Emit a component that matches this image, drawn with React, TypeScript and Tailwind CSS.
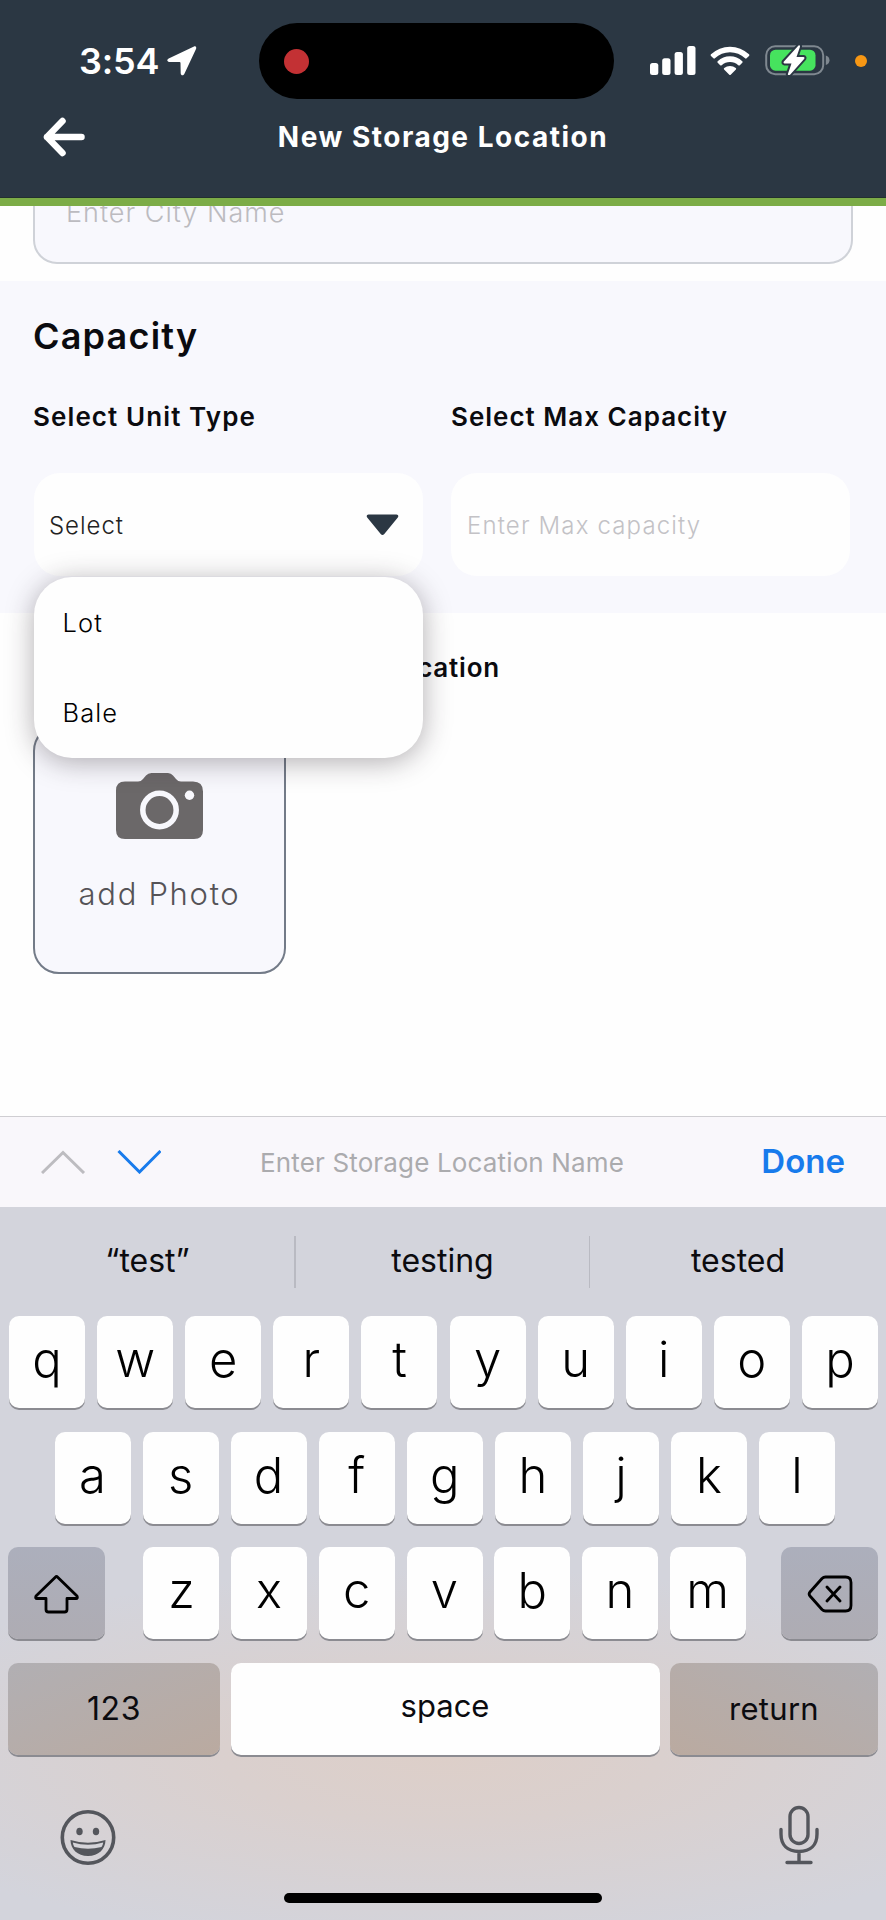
import React from "react";

const keyShadow = "shadow-[0_2px_0_#8b8b91]";

function Key({ children, className = "w-[76px]" }: { children: React.ReactNode; className?: string }) {
  return (
    <div
      className={`flex h-[92px] shrink-0 items-center justify-center rounded-[10px] bg-[#fefefe] pb-[5px] text-[49px] leading-[87px] font-light text-black ${keyShadow} ${className}`}
    >
      {children}
    </div>
  );
}

function StatusBar() {
  return (
    <div className="flex h-[76px] items-center">
      <span className="ml-[79px] w-[88px] text-[36px] leading-[76px] font-semibold tracking-[-0.2px]">3:54</span>
      <svg width="30" height="30" viewBox="0 0 30 30" fill="white" className="shrink-0">
        <path d="M27 .4 1.700 12.400C-.6 13.600.1 15.800 2.200 15.900L12.600 16.100Q13.500 16.200 13.500 17L13.700 27.200C13.800 29.700 16.300 30 17.300 28L28.900 3.200C29.900 1 28.600-.2 27 .4Z" />
      </svg>
      <div className="ml-[62px] flex h-[76px] w-[355px] shrink-0 items-center rounded-full bg-black pl-[25px]">
        <div className="h-[25px] w-[25px] rounded-full bg-[#c33134]" />
      </div>
      <svg width="46" height="30" viewBox="0 0 46 30" fill="white" className="ml-[35.500px] shrink-0">
        <rect x="0" y="17" width="8.300" height="12" rx="2.500" />
        <rect x="12.200" y="12.300" width="8.300" height="16.700" rx="2.500" />
        <rect x="24.600" y="6" width="8.300" height="23" rx="2.500" />
        <rect x="37.200" y="0" width="8.300" height="29" rx="2.500" />
      </svg>
      <svg width="40" height="30" viewBox="0 0 40 30" fill="white" className="ml-[14.500px] shrink-0">
        <path d="M1 8.300A27.500 27.500 0 0 1 39 8.300Q39.800 9.100 39 9.900L36.600 12.300Q35.900 13 35.100 12.300A22 22 0 0 0 4.900 12.300Q4.100 13 3.400 12.300L1 9.900Q.2 9.100 1 8.300Z" />
        <path d="M7.700 15.200A18 18 0 0 1 32.300 15.200Q33.100 16 32.300 16.700L29.800 19.200Q29.100 19.900 28.300 19.200A12.500 12.500 0 0 0 11.700 19.200Q10.900 19.900 10.200 19.200L7.700 16.700Q6.900 16 7.700 15.200Z" />
        <path d="M14.200 22.100A9 9 0 0 1 25.800 22.100Q26.600 22.900 25.900 23.600L20.700 28.700Q20 29.400 19.300 28.700L14.100 23.600Q13.400 22.900 14.200 22.100Z" />
      </svg>
      <svg width="65" height="34" viewBox="0 0 65 34" className="ml-[15px] shrink-0">
        <rect x="1.200" y="2.200" width="57" height="28" rx="9" fill="none" stroke="#7f8890" strokeWidth="2" />
        <path d="M60.800 11.400Q64.500 12.700 64.500 16.200T60.800 21Z" fill="#7f8890" />
        <rect x="5" y="5.700" width="45.500" height="21" rx="5.500" fill="#46e35e" />
        <path
          d="M33.500 1.500 18.700 17.700Q18 19.200 19.500 19.400H26.500L22.800 30.200Q23.600 31.800 25.300 30.400L39.300 14.700Q40 13.200 38.500 12.900H31.500L35 2.700Q35.200.5 33.500 1.500Z"
          fill="white"
          stroke="#2b3743"
          strokeWidth="4"
          paintOrder="stroke"
        />
      </svg>
      <div className="ml-[25px] h-[12px] w-[12px] shrink-0 rounded-full bg-[#f79714]" />
    </div>
  );
}

function Header() {
  return (
    <header className="flex h-[206px] shrink-0 flex-col border-b-[8px] border-[#7cac47] bg-[#2b3743] pt-[23px] text-white">
      <StatusBar />
      <div className="grid h-[74px] grid-cols-[100px_1fr_100px] items-center">
        <svg width="42" height="40" viewBox="0 0 42 40" fill="none" stroke="white" strokeWidth="6.500" strokeLinecap="round" strokeLinejoin="round" className="ml-[43px]">
          <path d="M19.500 4 4 20 19.500 36M4 20H38.500" />
        </svg>
        <h1 className="pt-[1px] text-center text-[28px] leading-[74px] font-bold tracking-[1.500px] whitespace-nowrap">New Storage Location</h1>
      </div>
      <div className="mt-auto h-[1px] bg-[#23302f]" />
    </header>
  );
}

function Form() {
  return (
    <main className="flex h-[910px] shrink-0 flex-col overflow-hidden bg-[#fefefe] text-[#0b0b0f]">
      <div className="mx-[33px] -mt-[46px] flex h-[104px] shrink-0 items-center rounded-[24px] border-2 border-[#cfd2d8] bg-[#f8f8fd] pt-[2px] pl-[31px]">
        <span className="text-[27px] font-light tracking-[1px] text-[#bcbbc0]">Enter City Name</span>
      </div>

      <section className="mt-[17px] h-[332px] shrink-0 bg-[#f8f8fd] pt-[35px] pl-[33px]">
        <h2 className="text-[36px] leading-[40px] font-semibold tracking-[1.200px]">Capacity</h2>
        <div className="mt-[46px] flex">
          <div className="w-[418px]">
            <div className="text-[26px] leading-[30px] font-semibold tracking-[1.100px]">Select Unit Type</div>
            <div className="relative mt-[41px] ml-[1px] flex h-[103px] w-[389px] items-center justify-between rounded-[26px] bg-[#fefefe] pr-[24px] pl-[15px]">
              <span className="pt-[2px] text-[24px] font-light tracking-[0.950px] text-[#222]">Select</span>
              <svg width="33" height="22" viewBox="0 0 33 22" fill="#2b3743">
                <path d="M2.500.5H30.500Q33.300 1 31.800 3.600L18.300 20Q16.500 22.200 14.700 20L1.200 3.600Q-.3 1 2.500.5Z" />
              </svg>
              <div className="absolute top-[104px] -left-[0.500px] z-10 flex h-[181px] w-[389px] flex-col rounded-[38px] bg-[#fefefe] pl-[29px] text-[25.500px] font-light tracking-[1.100px] text-black shadow-[0_4px_28px_rgba(40,30,40,0.36)]">
                <div className="flex h-[92px] items-center">Lot</div>
                <div className="flex h-[89px] items-center">Bale</div>
              </div>
            </div>
          </div>
          <div>
            <div className="text-[26px] leading-[30px] font-semibold tracking-[1px]">Select Max Capacity</div>
            <div className="mt-[41px] flex h-[103px] w-[399px] items-center rounded-[26px] bg-[#fefefe] pl-[16px]">
              <span className="pt-[2px] text-[24px] font-light tracking-[1.150px] text-[#c3c2c6]">Enter Max capacity</span>
            </div>
          </div>
        </div>
      </section>

      <section className="pt-[40px] pl-[33px]">
        <div className="w-[467px] text-right text-[26px] leading-[30px] font-semibold tracking-[0.800px]">Location</div>
        <div className="mt-[42px] flex h-[249px] w-[253px] flex-col items-center rounded-[26px] border-2 border-[#737b88] bg-[#f8f8fd] pt-[46px]">
          <svg width="87" height="66" viewBox="0 0 87 66" className="shrink-0">
            <path d="M9 8.500H22Q25 8.500 27 6L30 2.500Q32 0 35.500 0H52Q55 0 57 2.500L60 6Q62 8.500 65 8.500H77Q87 8.500 87 18.500V57Q87 66 78 66H9Q0 66 0 57V17.500Q0 8.500 9 8.500Z" fill="#6b6869" />
            <circle cx="43.500" cy="37" r="16.700" fill="none" stroke="#f8f8fd" strokeWidth="5.500" />
            <circle cx="73.500" cy="22.300" r="4.700" fill="#f8f8fd" />
          </svg>
          <span className="mt-[35px] text-[31px] leading-[40px] font-light tracking-[1.700px] text-[#555357]">add Photo</span>
        </div>
      </section>
    </main>
  );
}

function AccessoryBar() {
  return (
    <div className="flex h-[91px] shrink-0 items-center border-t border-[#cfced2] bg-[#f9f7fb]">
      <svg width="120" height="24" viewBox="0 0 120 24" fill="none" strokeWidth="3" className="ml-[41px] shrink-0">
        <path d="M1 23 22 2.500 43 23" stroke="#bdbcc0" />
        <path d="M77.500 1 98.500 22 119.500 1" stroke="#187bec" />
      </svg>
      <span className="ml-[99px] w-[370px] text-[26px] tracking-[0.150px] whitespace-nowrap text-[#ababae]">Enter Storage Location Name</span>
      <span className="mr-[41px] ml-auto text-[33px] font-semibold text-[#187bec]">Done</span>
    </div>
  );
}

function Keyboard() {
  return (
    <div className="flex grow flex-col bg-[#d3d4dc] bg-[radial-gradient(ellipse_620px_190px_at_50%_550px,#ddcfc9_0%,#dad0ce_35%,rgba(211,212,220,0)_100%)]">
      <div className="flex h-[109px] shrink-0 items-center text-[32px] leading-[50px] text-[#0b0b0f]">
        <div className="h-[52px] w-[294px] pl-[1px] text-center">“test”</div>
        <div className="h-[52px] w-[1.500px] bg-[#b9bac2]" />
        <div className="h-[52px] w-[293px] pl-[1px] text-center">testing</div>
        <div className="h-[52px] w-[1.500px] bg-[#b9bac2]" />
        <div className="h-[52px] w-[296px] text-center">tested</div>
      </div>
      <div className="flex flex-col gap-[23.500px]">
        <div className="flex justify-between pr-[8px] pl-[9px]">
          {"qwertyuiop".split("").map((c) => (
            <Key key={c}>{c}</Key>
          ))}
        </div>
        <div className="flex justify-between pr-[51px] pl-[54.500px]">
          {"asdfghjkl".split("").map((c) => (
            <Key key={c}>{c}</Key>
          ))}
        </div>
        <div className="flex justify-between px-[8px]">
          <div className={`flex h-[92px] w-[97px] items-center justify-center rounded-[10px] bg-linear-to-b from-[#acafbc] to-[#aeacb3] ${keyShadow}`}>
            <svg width="45" height="40" viewBox="0 0 45 40" fill="none" stroke="black" strokeWidth="2.800" strokeLinejoin="round" className="mt-[2px]">
              <path d="M21.300 3.200Q22.500 2 23.700 3.200L43 22Q44 24.500 42 24.500H33V35.500Q33 38 30.500 38H14.500Q12 38 12 35.500V24.500H3Q1 24.500 2 22Z" />
            </svg>
          </div>
          <div className="flex gap-[11.700px] pl-[3px]">
            {"zxcvbnm".split("").map((c) => (
              <Key key={c}>{c}</Key>
            ))}
          </div>
          <div className={`flex h-[92px] w-[97px] items-center justify-center rounded-[10px] bg-linear-to-b from-[#acafbc] to-[#aeacb3] ${keyShadow}`}>
            <svg width="46" height="38" viewBox="0 0 46 38" fill="none" stroke="black" strokeWidth="2.800" strokeLinecap="round" strokeLinejoin="round" className="mt-[2px]">
              <path d="M18.500 2H38.500Q44 2 44 7.500V30.500Q44 36 38.500 36H18.500Q16.500 36 15 34.500L3 21Q1.300 19 3 17L15 3.500Q16.500 2 18.500 2ZM20 12 33 26M33 12 20 26" />
            </svg>
          </div>
        </div>
        <div className="flex justify-between px-[8px] text-[31px] leading-[92px] text-[#0b0b0f]">
          <div className={`h-[92px] w-[212px] rounded-[10px] bg-linear-to-br from-[#b1afb3] to-[#baaaa0] text-center text-[32px] tracking-[0.500px] ${keyShadow}`}>123</div>
          <div className={`h-[92px] w-[429px] rounded-[10px] bg-[#fefefe] text-center leading-[86px] ${keyShadow}`}>space</div>
          <div className={`h-[92px] w-[208px] rounded-[10px] bg-linear-to-bl from-[#b1afb3] to-[#baaaa0] text-center tracking-[0.300px] ${keyShadow}`}>return</div>
        </div>
      </div>
      <div className="mt-[50px] flex justify-between pr-[66px] pl-[60px]">
        <svg width="56" height="60" viewBox="0 0 56 60">
          <circle cx="28" cy="32.500" r="25.700" fill="none" stroke="#54565c" strokeWidth="3.600" />
          <ellipse cx="19.500" cy="26.500" rx="3.200" ry="3.800" fill="#54565c" />
          <ellipse cx="36" cy="26.500" rx="3.200" ry="3.800" fill="#54565c" />
          <path d="M10.500 35Q28 40.500 45.500 35C45.500 44 38.500 51 28 51S10.500 44 10.500 35Z" fill="#54565c" />
          <path d="M12.800 37.500Q28 42 43.200 37.500Q43 39.800 41.500 42Q28 45.500 14.500 42Q13 39.800 12.800 37.500Z" fill="#d5d4d9" />
        </svg>
        <svg width="42" height="60" viewBox="0 0 42 60" fill="none" stroke="#54565c" strokeWidth="3.400" strokeLinecap="round">
          <rect x="12" y="2.500" width="18" height="36" rx="9" />
          <path d="M3 24.500V29C3 40 9.500 46.500 21 46.500S39 40 39 29V24.500M21 46.500V57.500M9 57.500H33" />
        </svg>
      </div>
      <div className="mx-auto mt-auto mb-[17px] h-[10px] w-[318px] rounded-full bg-black" />
    </div>
  );
}

export default function App() {
  return (
    <div className="flex h-[1920px] w-[886px] flex-col overflow-hidden bg-[#fefefe] font-['Inter','Liberation_Sans',sans-serif]">
      <Header />
      <Form />
      <AccessoryBar />
      <Keyboard />
    </div>
  );
}
